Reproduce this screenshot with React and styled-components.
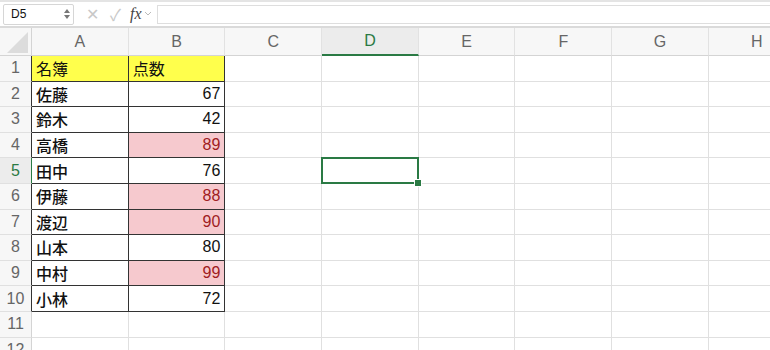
import React from 'react';
import styled, { createGlobalStyle } from 'styled-components';

const GlobalStyle = createGlobalStyle`
  body {
    margin: 0;
    background: #ffffff;
    font-family: "Liberation Sans", "Noto Sans CJK JP", sans-serif;
  }
`

const Sheet = styled.div`
  width: 770px;
  height: 350px;
  overflow: hidden;
  background: #fff;
`

// 数式バー
const FormulaBar = styled.div`
  display: flex;
  align-items: center;
  height: 28px;
  box-sizing: border-box;
  border-top: 2px solid #e4e4e4;
  border-bottom: 2px solid #dadada;
  padding-left: 3px;
`
const NameBox = styled.div`
  display: flex;
  align-items: center;
  justify-content: space-between;
  width: 71px;
  height: 21px;
  box-sizing: border-box;
  border: 1px solid #d6d6d6;
  border-radius: 2px;
  padding: 0 3px 0 7px;
  font-size: 12px;
  color: #111;
`
const Spinner = styled.div`
  display: flex;
  flex-direction: column;
  gap: 2px;
`
const Arrow = styled.span`
  width: 0;
  height: 0;
  border-left: 3px solid transparent;
  border-right: 3px solid transparent;
  ${p => p.$up ? 'border-bottom: 4px solid #777;' : 'border-top: 4px solid #777;'}
`
const Tools = styled.div`
  display: flex;
  align-items: center;
  gap: 11px;
  padding-left: 12px;
  color: #c8c8c8;
  font-size: 16px;
`
const Fx = styled.span`
  font-family: "Liberation Serif", serif;
  font-style: italic;
  font-size: 16px;
  color: #444;
  margin-left: -2px;
`
const FormulaInput = styled.div`
  flex: 1;
  height: 19px;
  margin-left: 4px;
  border: 1px solid #dedede;
  border-right: none;
  box-sizing: border-box;
`

// グリッド
const Grid = styled.div`
  display: grid;
  grid-template-columns: 32px repeat(8, 96.7px);
  grid-template-rows: 28px repeat(12, 25.6px);
`
const Corner = styled.div`
  position: relative;
  background: #f7f7f7;
  border-right: 1px solid #d4d4d4;
  border-bottom: 1px solid #d4d4d4;
  &::after {
    content: '';
    position: absolute;
    right: 3px;
    bottom: 2px;
    width: 0;
    height: 0;
    border-left: 21px solid transparent;
    border-bottom: 21px solid #dcdcdc;
  }
`
const ColHead = styled.div`
  display: flex;
  align-items: center;
  justify-content: center;
  background: ${p => p.$active ? '#ececec' : '#f7f7f7'};
  border-right: 1px solid #e2e2e2;
  border-bottom: ${p => p.$active ? '2px solid #2a7a44' : '1px solid #d4d4d4'};
  box-sizing: border-box;
  font-size: 16px;
  color: ${p => p.$active ? '#2a7a44' : '#666'};
`
const RowHead = styled.div`
  display: flex;
  align-items: center;
  justify-content: center;
  background: ${p => p.$active ? '#ececec' : '#f7f7f7'};
  border-right: 1px solid ${p => p.$active ? '#2a7a44' : p.$edge ? '#333' : '#d4d4d4'};
  border-bottom: 1px solid #e0e0e0;
  box-sizing: border-box;
  font-size: 16px;
  color: ${p => p.$active ? '#2a7a44' : '#666'};
`
const Cell = styled.div`
  position: relative;
  display: flex;
  align-items: center;
  justify-content: ${p => p.$num ? 'flex-end' : 'flex-start'};
  padding: 0 4px;
  box-sizing: border-box;
  background: ${p => p.$bg || '#fff'};
  border-right: 1px solid ${p => p.$edge ? '#333' : '#e0e0e0'};
  border-bottom: 1px solid ${p => p.$edge ? '#333' : '#e0e0e0'};
  font-family: ${p => p.$num ? '"Liberation Sans", sans-serif' : '"Noto Sans CJK JP", sans-serif'};
  font-size: 16px;
  font-weight: ${p => p.$weight || 400};
  color: ${p => p.$color || '#111'};
`
const Selection = styled.div`
  position: absolute;
  z-index: 2;
  left: -1px;
  top: -1px;
  right: -1px;
  bottom: -1px;
  border: 2px solid #2a7a44;
  &::after {
    content: '';
    position: absolute;
    right: -5px;
    bottom: -5px;
    width: 6px;
    height: 6px;
    background: #2a7a44;
    border: 1px solid #fff;
  }
`

const cols = ['A', 'B', 'C', 'D', 'E', 'F', 'G', 'H']
const data = [
  ['名簿', '点数'],
  ['佐藤', 67],
  ['鈴木', 42],
  ['高橋', 89],
  ['田中', 76],
  ['伊藤', 88],
  ['渡辺', 90],
  ['山本', 80],
  ['中村', 99],
  ['小林', 72],
]

const App = () => {
  var rows = []
  for (let r = 0; r < 12; r++) {
    const rec = data[r]
    rows.push(<RowHead key={'h' + r} $active={r === 4} $edge={!!rec}>{r + 1}</RowHead>)
    cols.forEach((c, ci) => {
      if (rec && ci < 2) {
        const v = rec[ci]
        const header = r === 0
        // 85点以上は赤で強調
        const high = !header && ci === 1 && v >= 85
        rows.push(
          <Cell
            key={c + r}
            $edge
            $num={!header && ci === 1}
            $weight={!header && ci === 0 ? 500 : 400}
            $bg={header ? '#ffff4c' : high ? '#f6c9ce' : null}
            $color={high ? '#a01c22' : null}
          >
            {v}
          </Cell>
        )
      } else {
        rows.push(
          <Cell key={c + r}>
            {r === 4 && c === 'D' && <Selection />}
          </Cell>
        )
      }
    })
  }

  return (
    <Sheet>
      <GlobalStyle />
      <FormulaBar>
        <NameBox>
          D5
          <Spinner>
            <Arrow $up />
            <Arrow />
          </Spinner>
        </NameBox>
        <Tools>
          <span>✕</span>
          <span>✓</span>
          <Fx>fx</Fx>
        </Tools>
        <svg width="10" height="8" viewBox="0 0 10 8" style={{ marginLeft: 2 }}>
          <path d="M2 2 L5 5 L8 2" fill="none" stroke="#bbb" strokeWidth="1" />
        </svg>
        <FormulaInput />
      </FormulaBar>
      <Grid>
        <Corner />
        {cols.map(c => <ColHead key={c} $active={c === 'D'}>{c}</ColHead>)}
        {rows}
      </Grid>
    </Sheet>
  )
}

export default App
